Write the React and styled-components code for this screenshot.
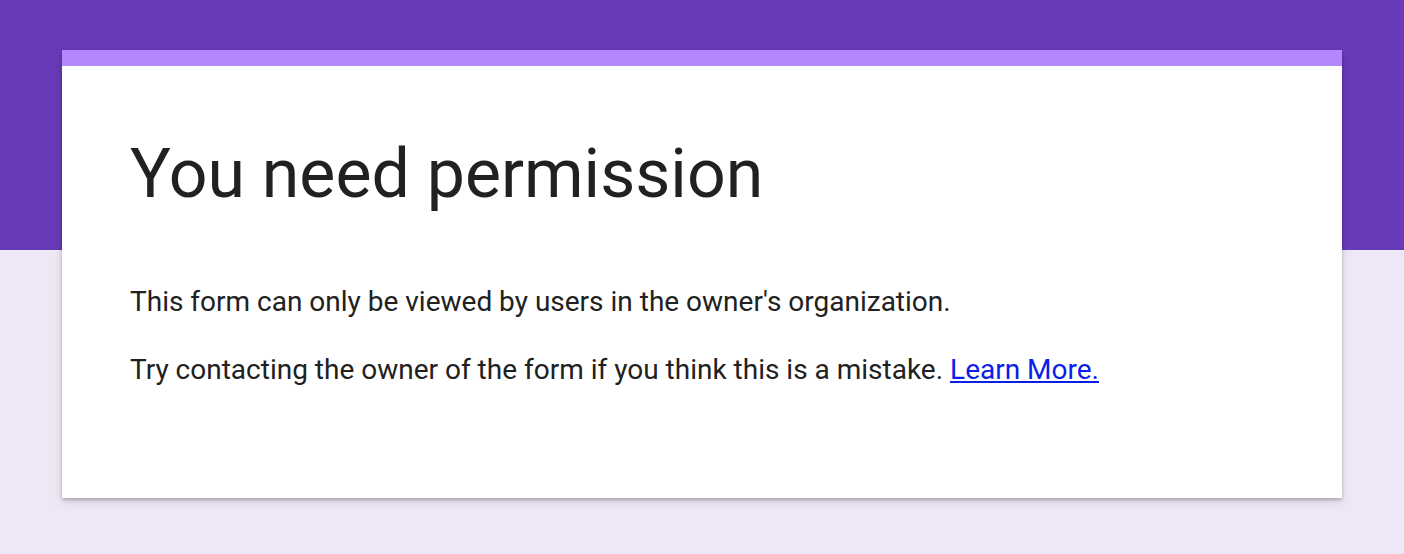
import React from 'react';
import styled, { createGlobalStyle } from 'styled-components';

const GlobalStyle = createGlobalStyle`
  html, body {
    margin: 0;
    padding: 0;
    background-color: #ede7f6;
    font-family: Roboto, "Noto Sans", Arial, sans-serif;
  }
`;

const Page = styled.div`
  min-height: 554px;
  background: linear-gradient(to bottom, #673ab7 0, #673ab7 250px, #ede7f6 250px);
  padding: 50px 62px 0;
  box-sizing: border-box;
`;

const Card = styled.div`
  background-color: #fff;
  border-top: 16px solid #b388ff;
  box-shadow: 0 2px 3px 0 rgba(0, 0, 0, 0.22), 0 4px 10px 0 rgba(0, 0, 0, 0.1);
  padding: 68px 68px 0;
  height: 448px;
  box-sizing: border-box;
`;

const Title = styled.h1`
  margin: 0 0 70px;
  font-size: 68px;
  font-weight: 400;
  line-height: 80px;
  color: #212121;
`;

const Paragraph = styled.p`
  margin: 0 0 32px;
  font-size: 28px;
  line-height: 36px;
  color: #212121;
`;

const Link = styled.a`
  color: #0a1ee8;
  text-decoration: underline;
`;

const App = () => (
  <>
    <GlobalStyle />
    <Page>
      <Card>
        <Title>You need permission</Title>
        <Paragraph>This form can only be viewed by users in the owner's organization.</Paragraph>
        <Paragraph>
          Try contacting the owner of the form if you think this is a mistake.{' '}
          <Link href="#">Learn More.</Link>
        </Paragraph>
      </Card>
    </Page>
  </>
);

export default App;
